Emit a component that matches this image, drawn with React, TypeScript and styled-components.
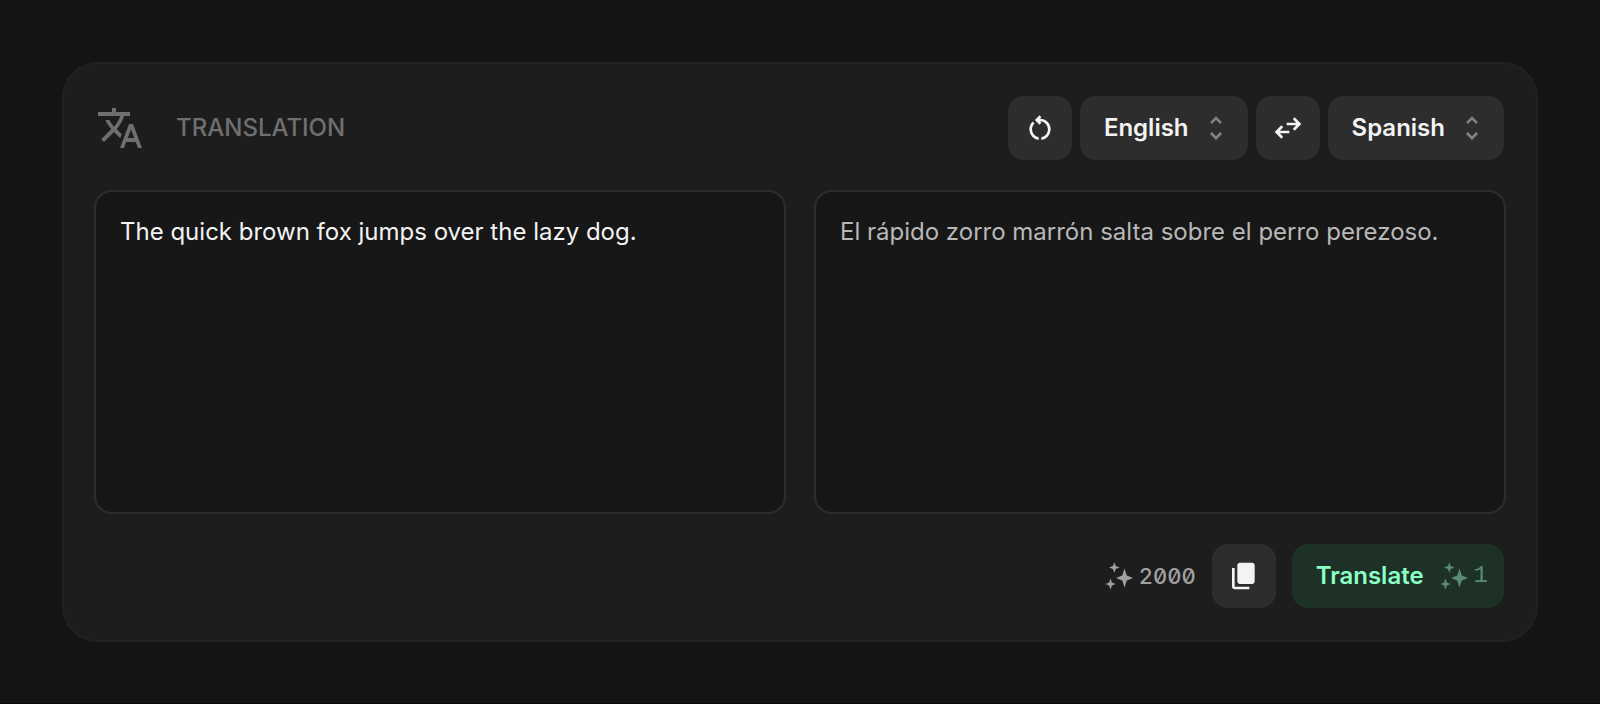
import React, { useState } from "react";
import styled, { createGlobalStyle } from "styled-components";

const GlobalStyle = createGlobalStyle`
  *, *::before, *::after { box-sizing: border-box; }
  body {
    margin: 0;
    background: #141414;
    color: #f3f3f3;
    font-family: Inter, "Liberation Sans", sans-serif;
    font-size: 24px;
    font-weight: 500;
    line-height: 36px;
  }
  button, select, textarea { font: inherit; color: inherit; margin: 0; }
`;

const Page = styled.main`
  display: flex;
  flex-direction: column;
  min-height: 100vh;
  padding: 62px 62px 61px;
  border-bottom: 1px solid #10040a;
`;

const Card = styled.section`
  flex: 1;
  display: flex;
  flex-direction: column;
  gap: 30px;
  padding: 32px 30px;
  border: 2px solid #212121;
  border-radius: 36px;
  background: #1d1d1d;
`;

const Bar = styled.div<{ $justify: string; $gap: number }>`
  display: flex;
  flex-wrap: wrap;
  align-items: center;
  justify-content: ${(p) => p.$justify};
  gap: ${(p) => p.$gap}px;
  padding: 0 2px;
`;

const Heading = styled.div`
  display: flex;
  align-items: center;
  gap: 32px;
  color: #6f6f6f;
`;

const Title = styled.h1`
  margin: 0;
  font-size: 24px;
  font-weight: 500;
  text-transform: uppercase;
`;

const Controls = styled.div`
  display: flex;
  flex-wrap: wrap;
  gap: 8px;
`;

const IconButton = styled.button`
  display: grid;
  place-items: center;
  width: 64px;
  height: 64px;
  padding: 0;
  border: 0;
  border-radius: 16px;
  background: #2d2d2d;
  cursor: pointer;
`;

const SelectBox = styled.label`
  display: grid;
  align-items: center;
  height: 64px;
  border-radius: 16px;
  background: #2d2d2d;

  > * { grid-area: 1 / 1; }
  > svg {
    justify-self: end;
    margin-right: 16px;
    color: #808080;
    pointer-events: none;
  }
`;

const Select = styled.select`
  appearance: none;
  field-sizing: content;
  height: 64px;
  padding: 0 59px 0 24px;
  border: 0;
  border-radius: 16px;
  background: transparent;
  font-weight: 600;
  cursor: pointer;

  option { background: #2d2d2d; }
`;

const Panels = styled.div`
  flex: 1;
  display: grid;
  grid-template-columns: 1fr 1fr;
  gap: 28px;
`;

const TextPanel = styled.textarea<{ $muted?: boolean }>`
  width: 100%;
  min-height: 324px;
  padding: 22px 24px;
  border: 2px solid #2d2d2d;
  border-radius: 18px;
  background: #171717;
  color: ${(p) => (p.$muted ? "#b8b8b8" : "#f3f3f3")};
  font-weight: 400;
  resize: none;
  outline: none;
`;

const Credits = styled.span<{ $color: string }>`
  display: flex;
  align-items: center;
  gap: 6px;
  color: ${(p) => p.$color};
  font-weight: 400;
`;

const Balance = styled.span`
  font-size: 22px;
  font-weight: 500;
  font-feature-settings: "zero", "tnum";
`;

const Cost = styled.span`
  font-family: "Liberation Mono", monospace;
`;

const TranslateButton = styled.button`
  display: flex;
  align-items: center;
  gap: 16px;
  height: 64px;
  padding: 0 16px 0 24px;
  border: 0;
  border-radius: 16px;
  background: #1d3127;
  color: #8bffc4;
  font-weight: 600;
  cursor: pointer;
`;

const ICONS = {
  restart:
    "M440-122q-121-15-200.5-105.5T160-440q0-66 26-126.5T260-672l57 57q-38 34-57.5 79T240-440q0 88 56 155.5T440-202v80Zm80 0v-80q87-16 143.5-83T720-440q0-100-70-170t-170-70h-3l44 44-56 56-140-140 140-140 56 56-44 44h3q134 0 227 93t93 227q0 121-79.5 211.5T520-122Z",
  swap: "M280-160 80-360l200-200 56 57-103 103h287v80H233l103 103-56 57Zm400-240-56-57 103-103H440v-80h287L624-743l56-57 200 200-200 200Z",
  unfold:
    "M480-120 300-300l58-58 122 122 122-122 58 58-180 180ZM358-598l-58-58 180-180 180 180-58 58-122-122-122 122Z",
  copy: "M360-240q-33 0-56.5-23.5T280-320v-480q0-33 23.5-56.5T360-880h360q33 0 56.5 23.5T800-800v480q0 33-23.5 56.5T720-240H360ZM200-80q-33 0-56.5-23.5T120-160v-560h80v560h440v80H200Z",
};

function Icon({ name }: { name: keyof typeof ICONS }) {
  return (
    <svg width="32" height="32" viewBox="0 -960 960 960" fill="currentColor" aria-hidden="true">
      <path d={ICONS[name]} />
    </svg>
  );
}

function TranslateIcon() {
  return (
    <svg width="48" height="48" viewBox="0 0 24 24" fill="currentColor" aria-hidden="true">
      <path d="M12.87 15.07l-2.54-2.51.03-.03c1.74-1.94 2.98-4.17 3.71-6.53H17V4h-7V2H8v2H1v1.99h11.17C11.5 7.92 10.44 9.75 9 11.35 8.07 10.32 7.3 9.19 6.69 8h-2c.73 1.63 1.73 3.17 2.98 4.56l-5.09 5.02L4 19l5-5 3.11 3.11.76-2.04zM18.5 10h-2L12 22h2l1.12-3h4.75L21 22h2l-4.5-12zm-2.62 7l1.62-4.33L19.12 17h-3.24z" />
    </svg>
  );
}

function SparklesIcon() {
  return (
    <svg width="28" height="28" viewBox="0 0 28 28" fill="currentColor" aria-hidden="true">
      <path d="M19.5 6.5l2.3 7 6.2 2.5-6.2 2.5-2.3 7-2.3-7L11 16l6.2-2.5z" />
      <path d="M9.3.2l1.4 3.9 3.9 1.4-3.9 1.4-1.4 3.9-1.4-3.9L4 5.5l3.9-1.4z" />
      <path d="M5.5 16.4l1.4 4.2 3.7 1.4-3.7 1.4-1.4 4.2-1.4-4.2L.4 22l3.7-1.4z" />
    </svg>
  );
}

const LANGUAGES = ["English", "Spanish"];

function LanguageSelect(props: { label: string; value: string; onChange: (v: string) => void }) {
  return (
    <SelectBox>
      <Select
        aria-label={props.label}
        value={props.value}
        onChange={(e) => props.onChange(e.target.value)}
      >
        {LANGUAGES.map((l) => (
          <option key={l}>{l}</option>
        ))}
      </Select>
      <Icon name="unfold" />
    </SelectBox>
  );
}

export default function App() {
  const [from, setFrom] = useState("English");
  const [to, setTo] = useState("Spanish");
  const [source, setSource] = useState("The quick brown fox jumps over the lazy dog.");
  const [result, setResult] = useState("El rápido zorro marrón salta sobre el perro perezoso.");

  const swap = () => {
    setFrom(to);
    setTo(from);
    setSource(result);
    setResult(source);
  };

  const reset = () => {
    setSource("");
    setResult("");
  };

  return (
    <>
      <GlobalStyle />
      <Page>
        <Card>
          <Bar $justify="space-between" $gap={16}>
            <Heading>
              <TranslateIcon />
              <Title>Translation</Title>
            </Heading>
            <Controls>
              <IconButton type="button" aria-label="Reset" onClick={reset}>
                <Icon name="restart" />
              </IconButton>
              <LanguageSelect label="Source language" value={from} onChange={setFrom} />
              <IconButton type="button" aria-label="Swap languages" onClick={swap}>
                <Icon name="swap" />
              </IconButton>
              <LanguageSelect label="Target language" value={to} onChange={setTo} />
            </Controls>
          </Bar>
          <Panels>
            <TextPanel
              aria-label="Source text"
              spellCheck={false}
              value={source}
              onChange={(e) => setSource(e.target.value)}
            />
            <TextPanel $muted aria-label="Translated text" spellCheck={false} readOnly value={result} />
          </Panels>
          <Bar $justify="flex-end" $gap={16}>
            <Credits $color="#a0a0a0">
              <SparklesIcon />
              <Balance>2000</Balance>
            </Credits>
            <IconButton
              type="button"
              aria-label="Copy translation"
              onClick={() => navigator.clipboard?.writeText(result)}
            >
              <Icon name="copy" />
            </IconButton>
            <TranslateButton type="button">
              Translate
              <Credits $color="#5a8a74">
                <SparklesIcon />
                <Cost>1</Cost>
              </Credits>
            </TranslateButton>
          </Bar>
        </Card>
      </Page>
    </>
  );
}
